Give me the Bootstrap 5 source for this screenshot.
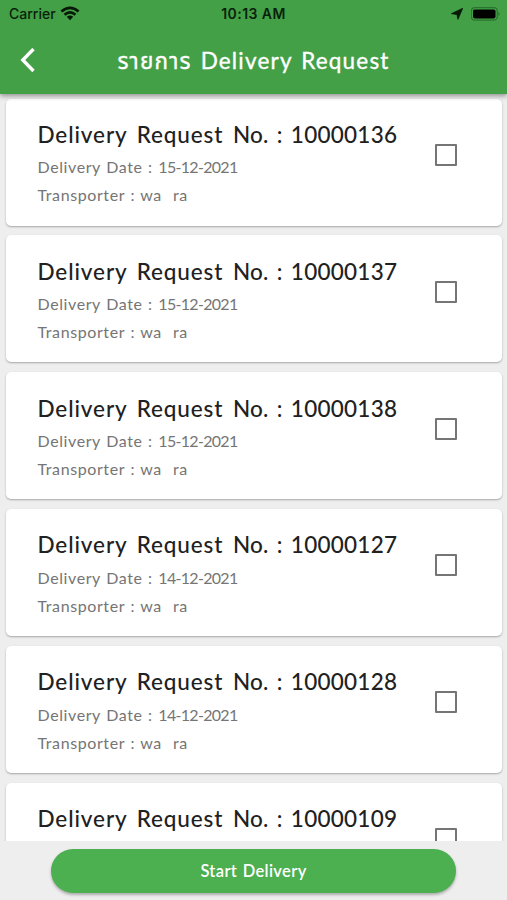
<!DOCTYPE html>
<html lang="th">
<head>
<meta charset="utf-8">
<meta name="viewport" content="width=device-width, initial-scale=1">
<title>Delivery Request</title>
<link href="https://cdn.jsdelivr.net/npm/bootstrap@5.3.0/dist/css/bootstrap.min.css" rel="stylesheet">
<style>
  body { height: 900px; background: #eee; font-family: Lato, "Noto Sans", "Noto Sans Thai", sans-serif; color: #212121; }
  .app-header { height: 94px; background: #43a047; box-shadow: 0 2px 5px rgba(0,0,0,.4); z-index: 2; }
  .status-bar { height: 27px; padding: 0 7px 0 9px; font: 500 14px/27px Inter, sans-serif; color: #0a1f0b; }
  .status-bar .clock { font-weight: 600; color: #0a1f0b; letter-spacing: .45px; margin-left: -2px; }
  .side { width: 100px; }
  .title-bar { height: 67px; padding: 0 20px; }
  .page-title { font-size: 22.5px; line-height: 30px; font-weight: 400; letter-spacing: 1.2px; word-spacing: 2px; -webkit-text-stroke: .35px #fff; white-space: nowrap; }
  .request-list { height: 747px; padding: 4.7px 5px 0 6px; gap: 9.8px; }
  .request-card { height: 127px; border-radius: 5px; padding: 20.3px 45px 0 31.5px; box-shadow: 0 1px 2px rgba(0,0,0,.3); }
  .request-no { font-size: 22.5px; line-height: 32px; letter-spacing: .9px; word-spacing: 3px; white-space: nowrap; margin: 0 0 2.4px; }
  .request-no .no-label { letter-spacing: .25px; word-spacing: 2.2px; }
  .request-no .digits { letter-spacing: .25px; }
  .request-meta { font-size: 16px; line-height: 28px; letter-spacing: .6px; word-spacing: .9px; color: #757575; white-space: pre; }
  .request-meta .digits { letter-spacing: -.7px; }
  .tick-box { width: 22px; height: 22px; margin-top: 25px; border: 2px solid #757575; border-radius: 1px; }
  .footer-bar { height: 59px; padding: 8px 51px 7px; }
  .start-btn, .start-btn:hover { background: #4caf50; color: #fff; border: 0; font-size: 16.5px; font-weight: 600; letter-spacing: .35px; word-spacing: 1px; box-shadow: 0 2px 3px rgba(0,0,0,.28); }
</style>
</head>
<body class="d-flex flex-column overflow-hidden">
<header class="app-header position-relative flex-shrink-0">
  <div class="status-bar d-flex justify-content-between">
    <div class="side d-flex align-items-center"><span>Carrier</span>
      <svg class="ms-1" width="20" height="15" viewBox="0 0 18 14" fill="none" stroke="#061806" stroke-width="2.5"><path d="M1 5.1Q9-1.7 17 5.1M3.9 8.1Q9 3.9 14.1 8.1"/><path d="M6 10.1Q9 7.6 12 10.1L9 13.2Z" fill="#061806" stroke="none"/></svg>
    </div>
    <div class="clock">10:13 AM</div>
    <div class="side d-flex align-items-center justify-content-end">
      <svg class="me-1" width="12" height="12" viewBox="0 0 11 11"><path d="M10.7.3 6.4 10.4 5.4 6 .3 5.2Z" fill="#061806" stroke="#061806" stroke-width=".7" stroke-linejoin="round"/></svg>
      <svg class="ms-1" width="29" height="14" viewBox="1 0 29 14"><rect x="1.3" y=".7" width="26" height="12.4" rx="3.5" fill="none" stroke="#2b742f" stroke-width="1.2"/><rect x="3" y="2.4" width="22.5" height="9" rx="1.8"/><path d="M28.3 5q2.8 2 0 4Z" fill="#2b742f"/></svg>
    </div>
  </div>
  <div class="title-bar d-flex align-items-center justify-content-between text-white">
    <svg width="16" height="26" viewBox="0 0 16 26" fill="none" stroke="#fff" stroke-width="3.4"><path d="M13.5 1 2.8 12 13.5 23"/></svg>
    <h1 class="page-title m-0">รายการ Delivery Request</h1>
    <span class="ps-3"></span>
  </div>
</header>
<main class="request-list d-flex flex-column flex-shrink-0 overflow-hidden" id="requests"></main>
<footer class="footer-bar d-flex flex-shrink-0">
  <button class="btn start-btn rounded-pill w-100" type="button">Start Delivery</button>
</footer>
<script src="https://cdn.jsdelivr.net/npm/bootstrap@5.3.0/dist/js/bootstrap.bundle.min.js"></script>
<script>
  const requests = [['10000136','15-12-2021'],['10000137','15-12-2021'],['10000138','15-12-2021'],['10000127','14-12-2021'],['10000128','14-12-2021'],['10000109']];
  document.getElementById('requests').innerHTML = requests.map(([no, date]) => `
    <article class="request-card bg-white d-flex justify-content-between align-items-start flex-shrink-0">
      <div><h2 class="request-no">Delivery Request <span class="no-label">No. : </span><span class="digits">${no}</span></h2>
      ${date ? `<div class="request-meta">Delivery Date : <span class="digits">${date}</span></div>
      <div class="request-meta">Transporter : wa  ra</div>` : ''}</div>
      <span class="tick-box flex-shrink-0" role="checkbox" aria-checked="false"></span>
    </article>`).join('');
</script>
</body>
</html>
